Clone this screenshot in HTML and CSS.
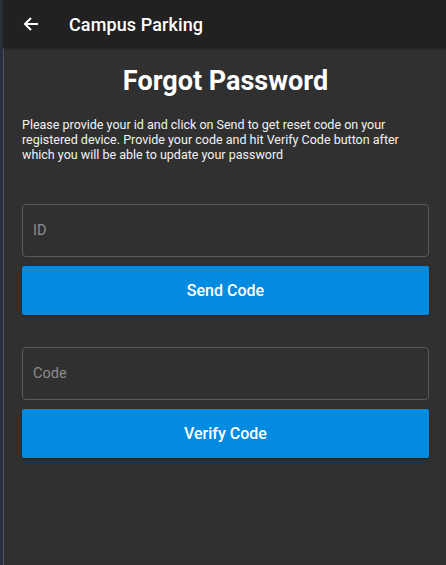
FILE: index.html
```html
<!DOCTYPE html>
<html>
<head>
<meta charset="utf-8">
<link rel="stylesheet" href="styles.css">
</head>
<body>
<div class="frame">
  <header class="appbar">
    <svg class="back" width="16" height="16" viewBox="0 0 16 16"><path d="M15 8H2M8 2L2 8l6 6" fill="none" stroke="#fff" stroke-width="2"/></svg>
    <span class="appbar-title">Campus Parking</span>
  </header>
  <main class="content">
    <h1 class="title">Forgot Password</h1>
    <p class="desc">Please provide your id and click on Send to get reset code on your registered device. Provide your code and hit Verify Code button after which you will be able to update your password</p>
    <div class="form">
      <div class="field"><span class="placeholder">ID</span></div>
      <button class="btn">Send Code</button>
    </div>
    <div class="form second">
      <div class="field"><span class="placeholder">Code</span></div>
      <button class="btn">Verify Code</button>
    </div>
  </main>
</div>
</body>
</html>
```
FILE: styles.css
```css
* { box-sizing: border-box; }
html, body { margin: 0; height: 100%; }
body {
  font-family: Roboto, "Noto Sans", sans-serif;
  background: #303030;
  color: #fff;
}
.frame {
  height: 565px;
  border-left: 3px solid #2b2f3d;
  box-shadow: inset 1px 0 0 #4c536b;
  display: flex;
  flex-direction: column;
  background: #303030;
}
.appbar {
  height: 48px;
  background: #212121;
  display: flex;
  align-items: center;
  padding-left: 20px;
  flex-shrink: 0;
  box-shadow: 0 1px 2px rgba(0,0,0,0.3);
}
.back { display: block; margin-top: 0; }
.appbar-title {
  margin-left: 30px;
  font-size: 18px;
  font-weight: 500;
  letter-spacing: 0.1px;
}
.content {
  padding: 0 17px 0 19px;
  display: flex;
  flex-direction: column;
}
.title {
  margin: 17px 0 0;
  text-align: center;
  font-size: 27px;
  font-weight: 700;
  line-height: 32px;
}
.desc {
  margin: 20px 0 0;
  font-size: 12.5px;
  line-height: 15px;
  color: #f2f2f2;
}
.form {
  display: flex;
  flex-direction: column;
  gap: 9px;
  margin-top: 42px;
}
.form.second { margin-top: 32px; }
.field {
  height: 53px;
  border: 1px solid #5a5a5a;
  border-radius: 4px;
  display: flex;
  align-items: center;
  padding-left: 10px;
}
.placeholder {
  color: #8c8c8c;
  font-size: 14.5px;
}
.btn {
  height: 49px;
  border: none;
  border-radius: 2px;
  background: #038ae1;
  color: #fff;
  font-family: Roboto, sans-serif;
  font-size: 16px;
  font-weight: 500;
  box-shadow: 0 1px 2px rgba(0,0,0,0.3);
}
```
